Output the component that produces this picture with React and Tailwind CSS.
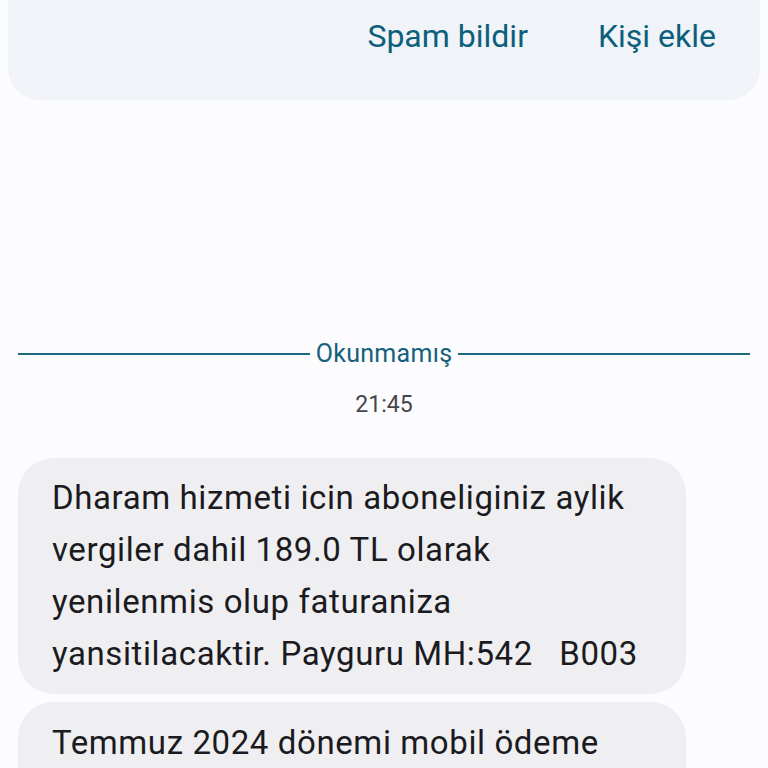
export default function App() {
  return (
    <div className="h-[768px] w-[768px] overflow-hidden bg-[#fcfbfe] font-['Roboto',sans-serif]">
      {/* Top action card */}
      <div className="mx-2 h-[100px] rounded-b-[32px] bg-[#f0f3f8] flex items-start justify-end gap-[70px] pr-[44px] pt-[15px]">
        <button className="text-[32px] leading-[42px] text-[#0c5f7b]">Spam bildir</button>
        <button className="text-[32px] leading-[42px] text-[#0c5f7b]">Kişi ekle</button>
      </div>

      {/* Unread divider */}
      <div className="mt-[239px] flex items-center px-[18px]">
        <div className="h-[2px] flex-1 bg-[#1f6a80]" />
        <span className="px-[6px] text-[25px] leading-[30px] text-[#15607a] tracking-[0.3px]">Okunmamış</span>
        <div className="h-[2px] flex-1 bg-[#1f6a80]" />
      </div>

      <div className="mt-[21px] text-center text-[23px] leading-[30px] text-[#46464a]">21:45</div>

      {/* Messages */}
      <div className="mt-[38px] flex flex-col gap-[8px] pl-[18px]">
        <div className="w-[668px] whitespace-nowrap rounded-[36px] bg-[#efeff1] pl-[34px] pt-[14px] pb-[14px] text-[33px] leading-[52px] text-[#1b1b1f] tracking-[0.6px]">
          Dharam hizmeti icin aboneliginiz aylik
          <br />
          vergiler dahil 189.0 TL olarak
          <br />
          yenilenmis olup faturaniza
          <br />
          yansitilacaktir. Payguru MH:542&nbsp;&nbsp;&nbsp;B003
        </div>
        <div className="w-[668px] whitespace-nowrap rounded-[36px] bg-[#efeff1] pl-[34px] pt-[15px] pb-[14px] text-[33px] leading-[52px] text-[#1b1b1f] tracking-[0.6px]">
          Temmuz 2024 dönemi mobil ödeme
          <br />
          işlemleriniz faturanıza yansıtılacaktır.
        </div>
      </div>
    </div>
  )
}
